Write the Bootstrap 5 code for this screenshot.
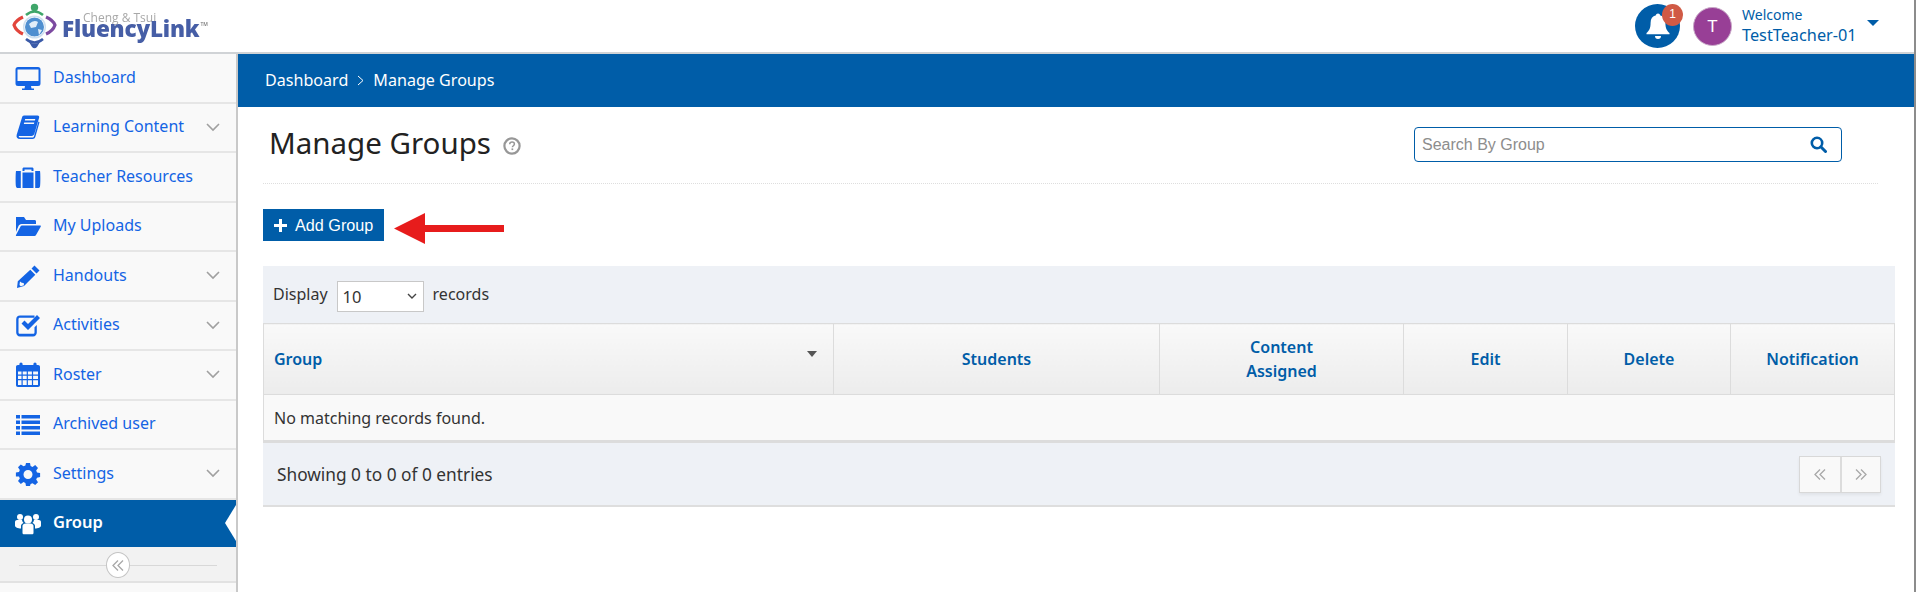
<!doctype html>
<html lang="en">
<head>
<meta charset="utf-8">
<title>Manage Groups</title>
<link href="https://cdn.jsdelivr.net/npm/bootstrap@5.3.0/dist/css/bootstrap.min.css" rel="stylesheet">
<style>
html,body{height:592px;overflow:hidden;background:#fff}
body{font-family:"Noto Sans","Open Sans",sans-serif;font-size:16px;color:#333}
.shell{width:1916px;height:592px;border-right:2px solid #8c8c8c;display:flex;flex-direction:column}
.topbar{height:54px;flex:none;border-bottom:2px solid #d0d3d6;background:#fff;padding-right:35px}
.logo-wrap{padding-left:12px;width:236px;height:52px}
.logo-mark{width:46px;height:46px;margin-top:3px;flex:none;filter:blur(.3px)}
.logo-text{margin-left:4px;margin-top:15px;font-family:"Open Sans",sans-serif;filter:blur(.35px)}
.logo-sub{display:block;margin-left:21px;font-size:12px;line-height:6px;font-weight:400;color:#a8a8a8}
.logo-main{display:block;font-weight:800;font-size:22.5px;line-height:16px;color:#465ea6;letter-spacing:-.2px}
.logo-tm{font-size:5px;vertical-align:top;line-height:6px;font-weight:600;color:#777;letter-spacing:0;margin-left:1px}
.bell-wrap{position:relative;width:45px;height:44px;margin-right:13px;border-radius:50%;background:#005da8}
.bell-badge{position:absolute;left:27px;top:0;width:21px;height:22px;border-radius:50%;background:#d05a45;color:#fff;font-size:12px;line-height:20px;text-align:center;font-family:"Liberation Sans",sans-serif}
.avatar-t{width:39px;height:39px;border-radius:50%;background:#983f96;border:1px solid #c9a9c8;color:#fff;font-family:"Liberation Sans",sans-serif;font-size:17px;line-height:37px;text-align:center;margin-right:10px}
.who{color:#005da8;width:125px}
.who-1{font-size:14px;line-height:18px}
.who-2{font-size:16.3px;line-height:22px}
.who-caret{width:0;height:0;border-left:6px solid transparent;border-right:6px solid transparent;border-top:6px solid #005da8;margin-bottom:6px}
.layout{flex:1;min-height:0}
.side{width:238px;flex:none;background:#f9f9f9;border-right:2px solid #c9c9c9}
.side-item{height:49.5px;flex:none;border-bottom:2px solid #e6e6e6;color:#1464e4;text-decoration:none;padding:0 15px;position:relative}
.side-item svg.ic{width:26px;height:26px;flex:none;margin-right:12px;fill:#1464e4}
.side-item .lbl{flex:1;font-size:16px;line-height:22px;margin-top:-2px}
.side-item .chev{width:14px;height:9px;margin-right:1px;fill:none;stroke:#a0a0a0;stroke-width:1.6}
.side-on{height:47.5px;background:#005da8;color:#fff;border-bottom:0}
.side-on .lbl{font-weight:600;font-size:16.5px}
.side-on svg.ic{fill:#fff}
.side-on::after{content:"";position:absolute;right:0;top:5px;border-right:11px solid #fff;border-top:18px solid transparent;border-bottom:18px solid transparent}
.side-foot{height:36px;flex:none;background:#f2f2f2;border-bottom:2px solid #e2e2e2;position:relative}
.side-foot::before{content:"";position:absolute;left:19px;right:19px;top:18px;height:1px;background:#d8d8d8}
.collapse-dot{position:relative;width:24px;height:26px;margin-top:2px;border-radius:50%;background:#fff;border:1px solid #c4c4c4;color:#a3a3a3}
.main-area{flex:1;min-width:0}
.crumb-bar{height:53px;background:#005da8;color:#fff;padding:0 27px;font-size:16.1px}
.crumb-sep{width:7px;height:11px;margin:0 9px;fill:none;stroke:#fff;stroke-width:1}
.inner{padding:0 20px 0 25px}
.title-row{height:77px;border-bottom:1px dotted #dedede;width:1615px}
.page-title{font-size:29.5px;line-height:40px;font-weight:400;color:#222;margin:0 0 0 6px;padding-bottom:4px}
.help-ic{width:18px;height:18px;margin-left:12px;margin-top:2px}
.search-box{width:428px;height:35px;border:1px solid #005da8;border-radius:4px;margin-right:36px;margin-top:-1px;padding:0 14px 0 7px}
.search-box input{border:0;outline:0;flex:1;font-family:"Liberation Sans",sans-serif;font-size:16px;color:#555;background:transparent;padding:0}
.search-box input::placeholder{color:#8d8d8d;opacity:1}
.add-row{margin-top:25px}
.add-btn{width:121px;height:32px;background:#005da8;color:#fff;border-radius:0;border:0;font-family:"Liberation Sans",sans-serif;font-size:16.2px;padding:0 0 0 11px;line-height:32px}
.add-btn svg{width:13px;height:13px;margin-right:8px;fill:#fff;vertical-align:-1px}
.red-arrow{width:111px;height:31px;margin:4px 0 -4px 10px}
.act-row{margin-top:25px;width:1632px}
.tool-top{height:57px;background:#eef1f6;padding:0 10px 2px;color:#333;font-size:16px}
.fake-select{width:87px;height:31px;background:#fff;border:1px solid #c8c8c8;margin:5px 9px 0 9px;padding:0 5px;font-size:16.5px;line-height:29px;color:#333}
.fake-select svg{width:12px;height:8px;fill:none;stroke:#444;stroke-width:1.4}
.data-tbl{table-layout:fixed;width:1631px;border-collapse:collapse;margin:0;--bs-table-bg:transparent;--bs-table-border-color:#dcdcdc}
.data-tbl th{height:71px;background:linear-gradient(#f9f9f9,#ececec);color:#005da8;font-weight:600;font-size:16px;line-height:24px;text-align:center;border:1px solid #dcdcdc;vertical-align:middle;padding:0 10px;position:relative}
.data-tbl th.first{text-align:left}
.data-tbl td{height:47px;background:#f9f9f9;color:#333;font-size:16px;padding:0 10px;border:1px solid #dcdcdc;border-bottom:3px solid #dcdcdc;vertical-align:middle;box-shadow:none}
.w-a{width:570px}.w-b{width:326px}.w-c{width:244px}.w-d{width:164px}.w-e{width:163px}.w-f{width:164px}
.sort-tri{position:absolute;right:16px;top:27px;width:0;height:0;border-left:5px solid transparent;border-right:5px solid transparent;border-top:6px solid #555}
.tool-bot{height:64px;background:#eef1f6;border-bottom:2px solid #dedede;padding:0 14px 0 14px;font-size:17.3px;color:#333}
.tool-bot .tally{padding-top:2px}
.pager-box{display:flex;border:1px solid #d8d8d8;box-shadow:0 2px 3px rgba(0,0,0,.06);background:#f9f9f9;height:37px}
.pager-cell{width:40px;height:35px;color:#a3a3a3}
.pager-cell + .pager-cell{border-left:2px solid #dcdcdc}
.dbl{width:12px;height:11px;fill:none;stroke:#a8a8a8;stroke-width:1.3}
</style>
</head>
<body>
<div class="shell">
  <header class="topbar d-flex align-items-center justify-content-between">
    <div class="logo-wrap d-flex align-items-start">
      <svg class="logo-mark" viewBox="0 0 46 46">
        <circle cx="22.500" cy="24" r="9.500" fill="#4f8fd0"/>
        <path d="M17 21q5-5 9-2l-2 5-5 1zM26 26l4 1-3 5z" fill="#e3eef8"/>
        <circle cx="22.500" cy="24" r="10.800" fill="none" stroke="#cfe0f0" stroke-width="1.500"/>
        <circle cx="22.500" cy="4.500" r="3.700" fill="#3fa66a"/>
        <path d="M14 12Q22.500 5 31 12" fill="none" stroke="#3fa66a" stroke-width="2.600"/>
        <path d="M14 36Q22.500 43 31 36" fill="none" stroke="#3a5aa8" stroke-width="2.600"/>
        <path d="M17 39Q22.500 42 28 39L25 44Q22.500 46.500 20 44z" fill="#3a5aa8"/>
        <path d="M11 14Q4 17 2 22Q4 28 11 31" fill="none" stroke="#e2453c" stroke-width="3.200"/>
        <path d="M34 14Q41 17 43 22Q41 28 34 31" fill="none" stroke="#7c4aa0" stroke-width="3.200"/>
      </svg>
      <div class="logo-text"><span class="logo-sub">Cheng &amp; Tsui</span><span class="logo-main">FluencyLink<span class="logo-tm">TM</span></span></div>
    </div>
    <div class="d-flex align-items-center">
      <div class="bell-wrap d-flex align-items-center justify-content-center">
        <svg width="26" height="28" viewBox="0 0 26 28"><path fill="#fff" d="M13 1.500c1.200 0 2 .8 2 1.800 3.600.8 5.400 3.600 5.400 7.400 0 6 1.600 8 4.100 10.300v1.200H1.500v-1.200C4 18.700 5.600 16.700 5.600 10.700c0-3.800 1.800-6.600 5.400-7.400 0-1 .8-1.800 2-1.800zM10 24h6a3 3 0 0 1-6 0z"/></svg>
        <span class="bell-badge">1</span>
      </div>
      <div class="avatar-t">T</div>
      <div class="who">
        <div class="who-1">Welcome</div>
        <div class="who-2">TestTeacher-01</div>
      </div>
      <span class="who-caret"></span>
    </div>
  </header>

  <div class="layout d-flex">
    <nav class="side d-flex flex-column">
      <a class="side-item d-flex align-items-center" href="#"><svg class="ic" viewBox="0 0 26 26"><path d="M3 2h20a2.500 2.500 0 0 1 2.500 2.500v14A2.500 2.500 0 0 1 23 21h-7l.5 2.500H19V25H7v-1.500h2.500L10 21H3A2.500 2.500 0 0 1 .5 18.500v-14A2.500 2.500 0 0 1 3 2zm-.5 2.500V16h21V4.500z"/></svg><span class="lbl">Dashboard</span></a>
      <a class="side-item d-flex align-items-center" href="#"><svg class="ic" viewBox="0 0 26 26"><path fill-rule="evenodd" d="M9 1.500h13.500c1.500 0 2 1 1.600 2.300L19.500 19.500c-.5 1.500-1.500 2.500-3 2.500H4.500C3.800 22 3.500 22.600 4 23c.5.400 1 .5 1.800.5h11.500c1 0 1.500-.5 1.800-1.500l4.300-14.500 1.100.8-4.200 14.700c-.4 1.300-1.300 2-2.700 2H5c-2.800 0-4-2-3.300-4.300L7 3.500C7.300 2.400 8 1.500 9 1.500zM10.200 5l-.4 1.500h10.100l.4-1.500zM9.200 8.500l-.4 1.500h10.100l.4-1.500z"/></svg><span class="lbl">Learning Content</span><svg class="chev" viewBox="0 0 14 9"><path d="M1 1l6 6 6-6"/></svg></a>
      <a class="side-item d-flex align-items-center" href="#"><svg class="ic" viewBox="0 0 26 26"><path d="M9 3.500h8c1 0 1.500.5 1.500 1.500v2H25c.5 2 .5 14 0 15.500-.3 1-1 1.500-2 1.500h-2.800V7H5.800v17H3c-1 0-1.700-.5-2-1.500C.5 21 .5 9 1 7h6.500V5C7.500 4 8 3.500 9 3.500zM9.500 5.500V7h7V5.500zM7.500 8.500h11V24h-11z"/></svg><span class="lbl">Teacher Resources</span></a>
      <a class="side-item d-flex align-items-center" href="#"><svg class="ic" viewBox="0 0 26 26"><path d="M1 4h8l2 3h8.500c1 0 1.500.7 1.500 1.500V11H6.500C5 11 4 12 3.500 13L1 19zM7 12.500h18c.8 0 1 .5.700 1.200L21 22c-.3.600-.8 1-1.500 1H1.500c-.6 0-.8-.4-.5-1l4.500-8.500c.3-.6.800-1 1.500-1z"/></svg><span class="lbl">My Uploads</span></a>
      <a class="side-item d-flex align-items-center" href="#"><svg class="ic" viewBox="0 0 26 26"><path d="M19.500 2.500l5 5-3 3-5-5zM15.300 6.700l5 5L9 23l-7 2 .8-6.800zM5 18.500l-.5 3.500 1.200 1.200 3.300-1-.3-2.200-2-.3z"/></svg><span class="lbl">Handouts</span><svg class="chev" viewBox="0 0 14 9"><path d="M1 1l6 6 6-6"/></svg></a>
      <a class="side-item d-flex align-items-center" href="#"><svg class="ic" viewBox="0 0 26 26"><path d="M5 3.500h14.500v2.200H5c-1 0-1.500.5-1.500 1.500v13c0 1 .5 1.500 1.500 1.500h13c1 0 1.500-.5 1.500-1.500v-5l2.300-2.300v7.500c0 2.300-1.500 4-3.800 4H5c-2.300 0-3.800-1.700-3.800-4v-13c0-2.500 1.500-3.900 3.800-3.900z"/><path d="M6.500 11.500l3-3 3.500 3.500L22 3l3 3L13 18z"/></svg><span class="lbl">Activities</span><svg class="chev" viewBox="0 0 14 9"><path d="M1 1l6 6 6-6"/></svg></a>
      <a class="side-item d-flex align-items-center" href="#"><svg class="ic" viewBox="0 0 26 26"><path fill-rule="evenodd" d="M6 .5a1.600 1.600 0 0 1 1.600 1.600V3h10.800v-.9a1.600 1.600 0 0 1 3.200 0V3H23c1.300 0 2 .8 2 2v18c0 1.200-.7 2-2 2H3c-1.300 0-2-.8-2-2V5c0-1.200.7-2 2-2h1.400v-.9A1.600 1.600 0 0 1 6 .5zM3 9.500v3h3.500v-3zm4.700 0v3h4v-3zm5.200 0v3h4v-3zm5.200 0v3H23v-3zM3 13.700v3.300h3.500v-3.300zm4.700 0v3.300h4v-3.300zm5.200 0v3.300h4v-3.300zm5.200 0v3.300H23v-3.300zM3 18.200V23h3.500v-4.800zm4.700 0V23h4v-4.800zm5.200 0V23h4v-4.800zm5.200 0V23H23v-4.800z"/></svg><span class="lbl">Roster</span><svg class="chev" viewBox="0 0 14 9"><path d="M1 1l6 6 6-6"/></svg></a>
      <a class="side-item d-flex align-items-center" href="#"><svg class="ic" viewBox="0 0 26 26"><path d="M1 4h4v3.500H1zM6.500 4H25v3.500H6.500zM1 9.500h4V13H1zM6.500 9.500H25V13H6.500zM1 15h4v3.500H1zM6.500 15H25v3.500H6.500zM1 20.500h4V24H1zM6.500 20.500H25V24H6.500z"/></svg><span class="lbl">Archived user</span></a>
      <a class="side-item d-flex align-items-center" href="#"><svg class="ic" viewBox="0 0 26 26"><path fill-rule="evenodd" d="M11 2h4l.6 3.100 1.900.8 2.700-1.800 2.800 2.800-1.800 2.700.8 1.900 3.100.6v4l-3.100.6-.8 1.900 1.800 2.700-2.800 2.800-2.700-1.800-1.900.8L15 25h-4l-.6-3.100-1.900-.8-2.700 1.800-2.800-2.800 1.800-2.700-.8-1.900L.9 15.500v-4L4 10.900l.8-1.900L3 6.300l2.800-2.800 2.700 1.800 1.900-.8zM13 9a4.500 4.500 0 1 0 0 9 4.500 4.500 0 0 0 0-9z"/></svg><span class="lbl">Settings</span><svg class="chev" viewBox="0 0 14 9"><path d="M1 1l6 6 6-6"/></svg></a>
      <a class="side-item side-on d-flex align-items-center" href="#"><svg class="ic" viewBox="0 0 26 26"><circle cx="13" cy="9.500" r="4"/><circle cx="5" cy="7" r="3"/><circle cx="21" cy="7" r="3"/><path d="M7.500 16c0-1.500 1.500-2.500 3-2.500h5c1.500 0 3 1 3 2.500v7c0 .8-.7 1.300-1.500 1.300H9c-.8 0-1.500-.5-1.500-1.300z"/><path d="M0 12c0-1.200 1-2 2-2h5c.2 1.200.8 2.300 1.600 3C7 13.500 6 14.800 6 16v2.500c-3 0-6-1.200-6-3zM26 12c0-1.200-1-2-2-2h-5c-.2 1.200-.8 2.300-1.600 3C19 13.500 20 14.800 20 16v2.500c3 0 6-1.200 6-3z"/></svg><span class="lbl">Group</span></a>
      <div class="side-foot d-flex align-items-center justify-content-center">
        <div class="collapse-dot d-flex align-items-center justify-content-center"><svg class="dbl" viewBox="0 0 12 11"><path d="M6 .5L1 5.500l5 5M11 .5L6 5.500l5 5"/></svg></div>
      </div>
    </nav>

    <main class="main-area">
      <div class="crumb-bar d-flex align-items-center">
        <span>Dashboard</span>
        <svg class="crumb-sep" viewBox="0 0 7 11"><path d="M1 1l5 4.500-5 4.500"/></svg>
        <span>Manage Groups</span>
      </div>
      <div class="inner">
        <div class="title-row d-flex align-items-center justify-content-between">
          <div class="d-flex align-items-center">
            <h1 class="page-title">Manage Groups</h1>
            <svg class="help-ic" viewBox="0 0 18 18"><circle cx="9" cy="9" r="7.600" fill="#fff" stroke="#979797" stroke-width="2.200"/><path d="M6.700 7.200c.1-1.400 1-2.100 2.400-2.100s2.300.7 2.300 1.900c0 1.800-2 1.700-2 3.300" fill="none" stroke="#979797" stroke-width="1.500"/><rect x="8.500" y="11.400" width="1.700" height="1.700" fill="#979797"/></svg>
          </div>
          <div class="search-box d-flex align-items-center">
            <input type="text" placeholder="Search By Group" aria-label="Search By Group">
            <svg width="17" height="17" viewBox="0 0 17 17"><circle cx="7" cy="7" r="5.200" fill="none" stroke="#005da8" stroke-width="2.600"/><path d="M10.800 10.800l4.700 4.700" stroke="#005da8" stroke-width="3" stroke-linecap="round"/></svg>
          </div>
        </div>
        <div class="add-row d-flex align-items-start">
          <button class="btn add-btn text-start" type="button"><svg viewBox="0 0 13 13"><path d="M5 0h3v5h5v3H8v5H5V8H0V5h5z"/></svg>Add Group</button>
          <svg class="red-arrow" viewBox="0 0 111 31"><path fill="#e71c1c" d="M0 15.500L31 0v12h79v7H31v12z"/></svg>
        </div>
        <section class="act-row">
          <div class="tool-top d-flex align-items-center">
            <span>Display</span>
            <div class="fake-select d-flex align-items-center justify-content-between"><span>10</span><svg viewBox="0 0 12 8"><path d="M2 2l4 4 4-4"/></svg></div>
            <span>records</span>
          </div>
          <table class="table data-tbl">
            <colgroup><col class="w-a"><col class="w-b"><col class="w-c"><col class="w-d"><col class="w-e"><col class="w-f"></colgroup>
            <thead><tr>
              <th class="first">Group<span class="sort-tri"></span></th>
              <th>Students</th>
              <th>Content<br>Assigned</th>
              <th>Edit</th>
              <th>Delete</th>
              <th>Notification</th>
            </tr></thead>
            <tbody><tr><td colspan="6">No matching records found.</td></tr></tbody>
          </table>
          <div class="tool-bot d-flex align-items-center justify-content-between">
            <span class="tally">Showing 0 to 0 of 0 entries</span>
            <div class="pager-box">
              <div class="pager-cell d-flex align-items-center justify-content-center"><svg class="dbl" viewBox="0 0 12 11"><path d="M6 .5L1 5.500l5 5M11 .5L6 5.500l5 5"/></svg></div>
              <div class="pager-cell d-flex align-items-center justify-content-center"><svg class="dbl" viewBox="0 0 12 11"><path d="M1 .5l5 5-5 5M6 .5l5 5-5 5"/></svg></div>
            </div>
          </div>
        </section>
      </div>
    </main>
  </div>
</div>
<script src="https://cdn.jsdelivr.net/npm/bootstrap@5.3.0/dist/js/bootstrap.bundle.min.js"></script>
</body>
</html>
